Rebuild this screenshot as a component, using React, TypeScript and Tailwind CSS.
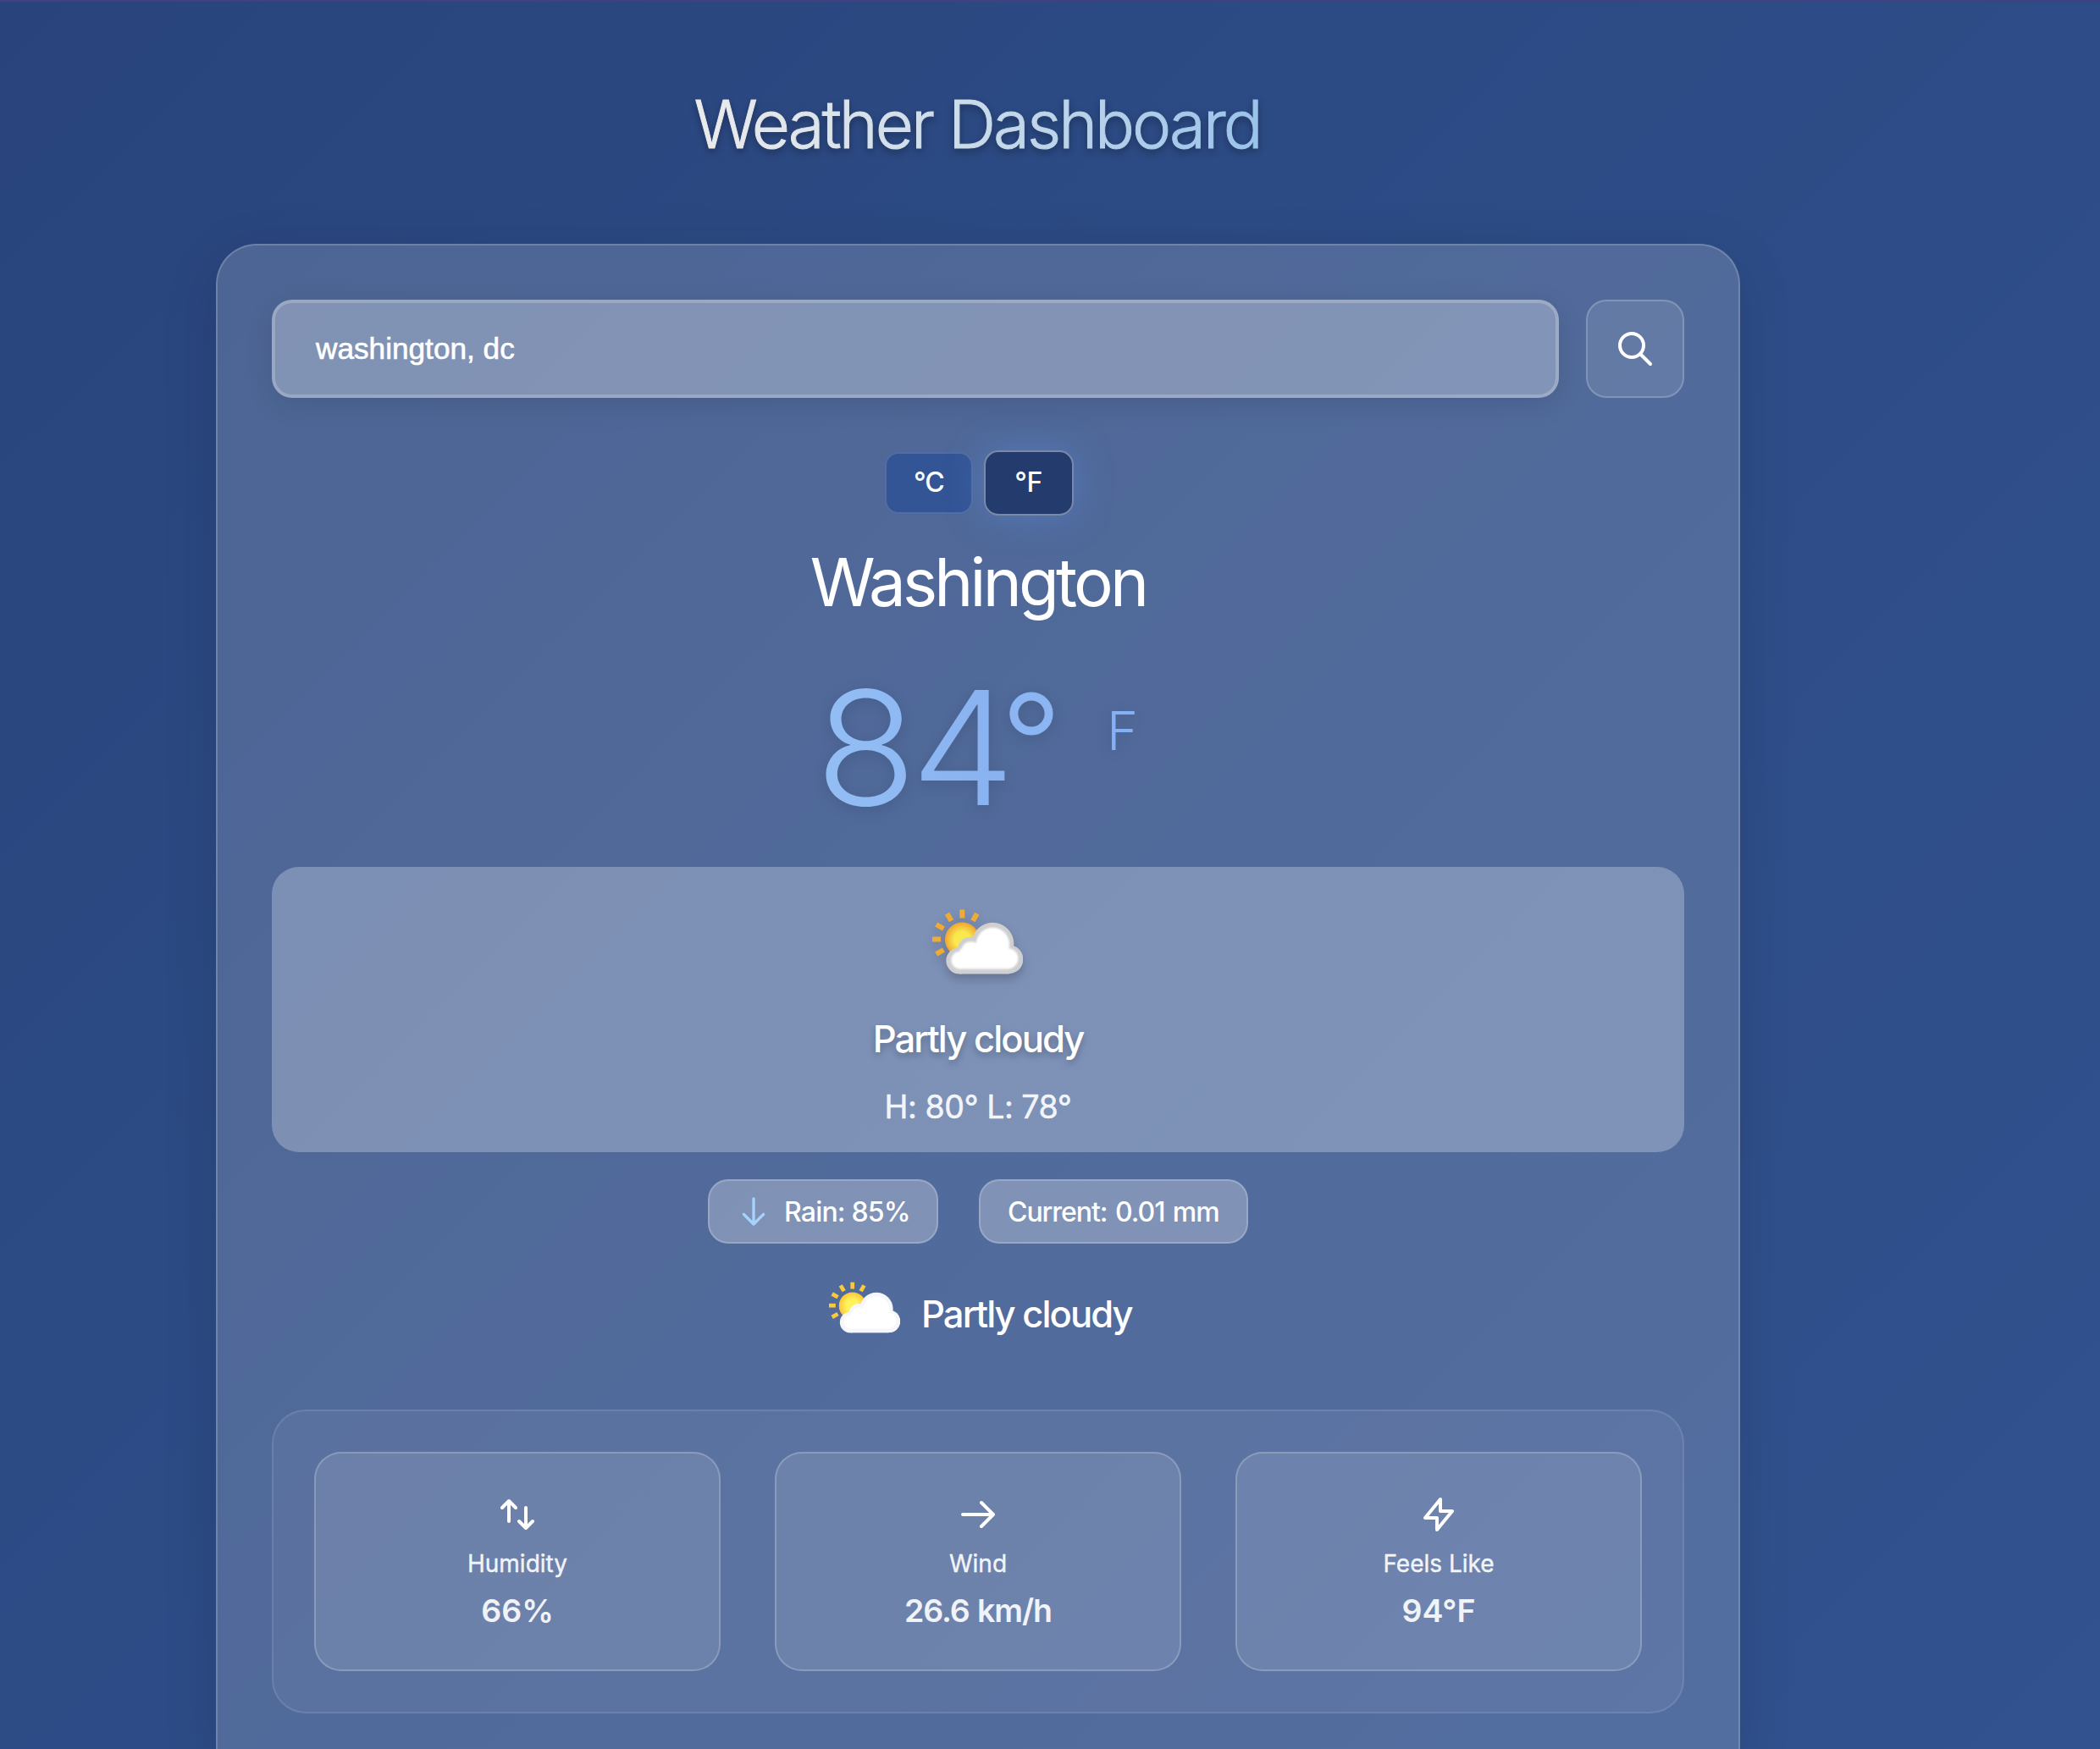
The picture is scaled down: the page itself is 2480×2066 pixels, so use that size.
import React from "react";

type IconProps = { d: string; className: string; strokeWidth?: number };

function StrokeIcon({ d, className, strokeWidth = 2 }: IconProps) {
  return (
    <svg
      viewBox="0 0 24 24"
      fill="none"
      stroke="currentColor"
      strokeWidth={strokeWidth}
      strokeLinecap="round"
      strokeLinejoin="round"
      className={className}
    >
      <path d={d} />
    </svg>
  );
}

const icons = {
  search: "M21 21l-6-6m2-5a7 7 0 11-14 0 7 7 0 0114 0z",
  down: "M19 14l-7 7m0 0l-7-7m7 7V3",
  swap: "M7 16V4m0 0L3 8m4-4l4 4m6 0v12m0 0l4-4m-4 4l-4-4",
  right: "M14 5l7 7m0 0l-7 7m7-7H3",
  bolt: "M13 10V3L4 14h7v7l9-11h-7z",
};

const rays: [number, number, number][] = [
  [106, 16, 0],
  [60, 28, -30],
  [151, 28, 30],
  [27, 61, -60],
  [15, 106, -90],
  [27, 151, -120],
];

function PartlyCloudy({
  id,
  className,
  rim,
  core,
  edge,
}: {
  id: string;
  className: string;
  rim: string;
  core: string;
  edge: string;
}) {
  return (
    <svg viewBox="0 0 321 230" className={className}>
      <defs>
        <radialGradient id={id + "-sun"}>
          <stop offset="0.45" stopColor={core} />
          <stop offset="0.95" stopColor={rim} />
        </radialGradient>
        <filter id={id + "-soft"} x="-10%" y="-10%" width="120%" height="120%">
          <feGaussianBlur stdDeviation="2.5" />
        </filter>
      </defs>
      {rays.map(([x, y, r], i) => (
        <rect key={i} x={x - 9} y={y - 15} width="18" height="30" fill={rim} transform={`rotate(${r} ${x} ${y})`} />
      ))}
      <circle cx="106" cy="107" r="61" fill={`url(#${id}-sun)`} />
      <g fill={edge}>
        <circle cx="214" cy="122" r="75" />
        <circle cx="271" cy="177" r="51" />
        <circle cx="134" cy="142" r="44" />
        <circle cx="96" cy="182" r="47" />
        <rect x="96" y="140" width="175" height="89" />
      </g>
      <g fill="#ffffff" filter={`url(#${id}-soft)`}>
        <circle cx="214" cy="124" r="59" />
        <circle cx="268" cy="174" r="36" />
        <circle cx="137" cy="148" r="34" />
        <circle cx="98" cy="180" r="31" />
        <rect x="98" y="140" width="172" height="71" />
      </g>
    </svg>
  );
}

const metrics = [
  { label: "Humidity", value: "66%", icon: icons.swap, labelCls: "", valueCls: "" },
  { label: "Wind", value: "26.6 km/h", icon: icons.right, labelCls: "", valueCls: "tracking-[-1.1px] [word-spacing:1px]" },
  { label: "Feels Like", value: "94°F", icon: icons.bolt, labelCls: "", valueCls: "" },
];

export default function App() {
  return (
    <div className="h-[2066px] w-full overflow-hidden border-t-2 border-[#44407f] bg-[linear-gradient(135deg,#29447c_0%,#2c4a84_35%,#31528f_100%)] font-['Inter',sans-serif] text-white">
      <div className="ml-[255px] flex h-full w-[1800px] flex-col pt-[97px]">
        <h1 className="mx-auto mb-[93px] bg-[linear-gradient(90deg,#ecebea_0%,#c9dbea_50%,#9ac3ea_100%)] bg-clip-text pr-[2px] text-[78px] leading-[96px] font-light tracking-[-3px] whitespace-nowrap text-transparent drop-shadow-[0_4px_4px_rgba(0,0,0,0.3)] [-webkit-text-stroke:1px_transparent]">
          Weather Dashboard
        </h1>

        <main className="flex flex-1 flex-col rounded-t-[48px] border-2 border-b-0 border-white/18 bg-white/17 px-16 pt-16 shadow-[0_16px_64px_rgba(0,0,0,0.13)]">
          <form className="flex gap-8">
            <div className="flex h-[116px] flex-1 items-center rounded-3xl border-4 border-white/20 bg-white/29 px-12 font-['Liberation_Sans',Arial,sans-serif] text-[35.2px] leading-[40px] shadow-[0_8px_32px_rgba(0,0,0,0.1)] [-webkit-text-stroke:0.6px_white]">
              washington, dc
            </div>
            <div className="flex size-[116px] items-center justify-center rounded-3xl border-2 border-white/20 bg-white/11">
              <StrokeIcon d={icons.search} className="size-12" />
            </div>
          </form>

          <div className="mt-[62px] flex h-[77px] items-center justify-center gap-[13px] pl-[3px] text-[32px] leading-[40px] font-medium">
            <div className="flex h-[73px] w-[104px] items-center justify-center rounded-2xl border-2 border-white/15 bg-[#335495] pb-[2px] tracking-[-0.9px]">
              °C
            </div>
            <div className="flex h-[77px] w-[106px] items-center justify-center rounded-[17px] border-2 border-white/40 bg-[#243b6e] pr-[1px] pb-[1px] tracking-[-0.4px] shadow-[0_0_40px_rgba(90,135,215,0.55)]">
              °F
            </div>
          </div>

          <h2 className="mt-[31px] text-center text-[78px] leading-[96px] font-normal tracking-[-3.8px] whitespace-nowrap">
            Washington
          </h2>

          <div className="mt-[35px] flex h-[224px] items-start justify-center font-light whitespace-nowrap text-[#8bb5f3] drop-shadow-[0_4px_8px_rgba(0,0,0,0.1)]">
            <span className="-ml-[3px] w-[219px] origin-left scale-x-[1.045] bg-[linear-gradient(90deg,#93bff5,#88b1ef)] bg-clip-text text-[187px] leading-[224px] tracking-[-6.5px] text-transparent">
              84
            </span>
            <span className="mt-[26px] ml-0 text-[158px] leading-[160px] [-webkit-text-stroke:1px_#8bb5f3]">°</span>
            <span className="mt-[52px] ml-[53px] text-[63px] leading-[80px] font-light text-[#84b0f5]">F</span>
          </div>

          <section className="mt-[29px] flex h-[337px] flex-col items-center rounded-[32px] bg-[#f4f7ff]/28 pt-[50px] whitespace-nowrap">
            <PartlyCloudy
              id="large"
              rim="#f0ab35"
              core="#fae94c"
              edge="#cfcfd1"
              className="mr-[2px] h-[77px] w-[107px] drop-shadow-[0_6px_6px_rgba(0,0,0,0.2)]"
            />
            <p className="mt-[49px] text-[43.6px] leading-[56px] font-medium tracking-[-1.95px] [text-shadow:0_4px_8px_rgba(0,0,0,0.25)]">
              Partly cloudy
            </p>
            <p className="mt-7 text-[37.5px] leading-[48px] tracking-[-0.45px] text-white/90 [-webkit-text-stroke:0.5px_rgba(255,255,255,0.9)]">
              H: 80° L: 78°
            </p>
          </section>

          <div className="mt-8 flex justify-center gap-12 text-[32px] leading-[40px] font-medium whitespace-nowrap">
            <div className="flex h-[76px] w-[272px] items-center gap-4 rounded-3xl border-2 border-white/20 bg-white/27 pl-8 tracking-[-0.8px]">
              <StrokeIcon d={icons.down} className="size-10 shrink-0 text-[#a5d3fb]" />
              <span className="pt-[2px]">Rain: 85%</span>
            </div>
            <div className="flex h-[76px] w-[318px] items-center rounded-3xl border-2 border-white/20 bg-white/27 pl-8 tracking-[-1.05px] [word-spacing:2px]">
              <span className="pt-[2px]">Current: 0.01 mm</span>
            </div>
          </div>

          <div className="mt-[45px] flex h-[66px] items-start justify-center gap-[25px] pl-[7px] whitespace-nowrap">
            <PartlyCloudy id="small" rim="#fdc93a" core="#fff35c" edge="#f6f7fb" className="h-[61px] w-[84px]" />
            <p className="mt-[11px] w-[250px] text-[43.6px] leading-[56px] font-medium tracking-[-1.95px]">Partly cloudy</p>
          </div>

          <section className="mt-[85px] flex h-[359px] gap-16 rounded-[40px] border-2 border-white/10 bg-white/6 p-12">
            {metrics.map((m) => (
              <div
                key={m.label}
                className="flex flex-1 flex-col items-center rounded-[32px] border-2 border-white/20 bg-white/11 pt-12 whitespace-nowrap"
              >
                <StrokeIcon d={m.icon} className="size-12" />
                <p
                  className={
                    "mt-[14px] text-[28px] leading-[40px] text-white/90 [-webkit-text-stroke:0.4px_rgba(255,255,255,0.9)] " + m.labelCls
                  }
                >
                  {m.label}
                </p>
                <p className={"mt-3 text-[37.5px] leading-[48px] font-semibold text-white/90 " + m.valueCls}>{m.value}</p>
              </div>
            ))}
          </section>
        </main>
      </div>
    </div>
  );
}
